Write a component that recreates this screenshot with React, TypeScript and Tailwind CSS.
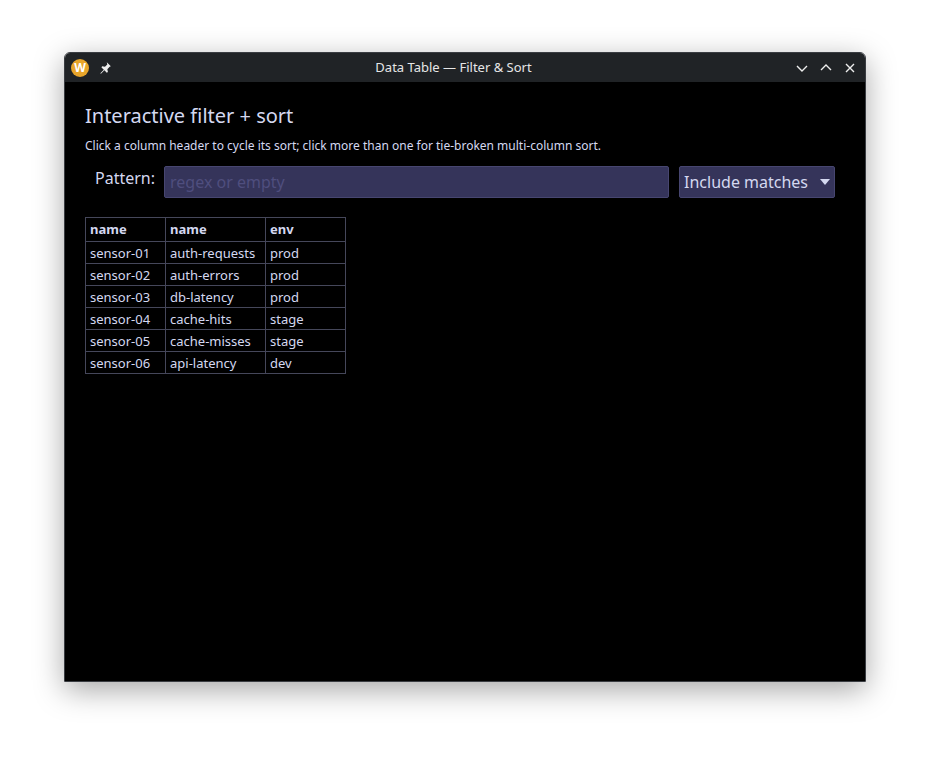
import React from 'react';

const rows = [
  ['sensor-01', 'auth-requests', 'prod'],
  ['sensor-02', 'auth-errors', 'prod'],
  ['sensor-03', 'db-latency', 'prod'],
  ['sensor-04', 'cache-hits', 'stage'],
  ['sensor-05', 'cache-misses', 'stage'],
  ['sensor-06', 'api-latency', 'dev'],
];

const App: React.FC = () => {
  return (
    <div className="w-[930px] h-[758px] bg-white pt-[52px] pl-[64px]" style={{ fontFamily: '"Noto Sans", sans-serif' }}>
      <div className="w-[802px] h-[630px] flex flex-col rounded-t-md overflow-hidden border border-[#3a3d42] shadow-[0_8px_30px_rgba(0,0,0,0.35)]">
        <div className="h-[29px] bg-[#202326] flex items-center px-[6px] text-[#e6e6e6] shrink-0">
          <div className="w-[18px] h-[18px] rounded-full bg-[#e8a52b] flex items-center justify-center text-white text-[12px] font-bold">W</div>
          <svg width="14" height="14" viewBox="0 0 24 24" className="ml-[9px]" fill="#eee">
            <path d="M15 2l7 7-2 1-4 4 1 5-2 1-4-4-6 6-1-1 6-6-4-4 1-2 5 1 4-4z" />
          </svg>
          <div className="flex-1 text-center text-[13px]">Data Table — Filter &amp; Sort</div>
          <div className="flex items-center gap-[10px] pr-[2px]">
            <svg width="14" height="14" viewBox="0 0 14 14" stroke="#eee" strokeWidth="1.4" fill="none"><path d="M2 5l5 5 5-5" /></svg>
            <svg width="14" height="14" viewBox="0 0 14 14" stroke="#eee" strokeWidth="1.4" fill="none"><path d="M2 9l5-5 5 5" /></svg>
            <svg width="14" height="14" viewBox="0 0 14 14" stroke="#eee" strokeWidth="1.4" fill="none"><path d="M3 3l8 8M11 3l-8 8" /></svg>
          </div>
        </div>
        <div className="flex-1 bg-black px-[20px] pt-[20px]">
          <h1 className="text-[20px] text-[#d4d8f0] leading-[28px]">Interactive filter + sort</h1>
          <p className="text-[12px] text-[#d4d8f0] mt-[8px] leading-[16px]">Click a column header to cycle its sort; click more than one for tie-broken multi-column sort.</p>
          <div className="flex items-center mt-[12px] pl-[10px]">
            <span className="text-[16px] text-[#d4d8f0] mr-[9px] -mt-[8px]">Pattern:</span>
            <div className="w-[505px] h-[32px] bg-[#35345a] border border-[#474670] rounded-[2px] flex items-center px-[5px] text-[16px] text-[#4f4e7e]">regex or empty</div>
            <div className="ml-[10px] w-[156px] h-[32px] bg-[#35345a] border border-[#474670] rounded-[2px] flex items-center justify-between pl-[4px] pr-[4px] text-[16px] text-[#d4d8f0]">
              <span>Include matches</span>
              <svg width="10" height="6" viewBox="0 0 10 6"><path d="M0 0h10L5 6z" fill="#d4d8f0" /></svg>
            </div>
          </div>
          <table className="mt-[19px] border-collapse text-[13px] text-[#d4d8f0]">
            <thead>
              <tr className="h-[24px]">
                <th className="w-[80px] border border-[#45475a] text-left font-bold px-[4px]">name</th>
                <th className="w-[100px] border border-[#45475a] text-left font-bold px-[4px]">name</th>
                <th className="w-[80px] border border-[#45475a] text-left font-bold px-[4px]">env</th>
              </tr>
            </thead>
            <tbody>
              {rows.map((r) => (
                <tr key={r[0]} className="h-[22px]">
                  {r.map((c, i) => (
                    <td key={i} className="border border-[#45475a] px-[4px] leading-[20px]">{c}</td>
                  ))}
                </tr>
              ))}
            </tbody>
          </table>
        </div>
      </div>
    </div>
  );
};

export default App;
